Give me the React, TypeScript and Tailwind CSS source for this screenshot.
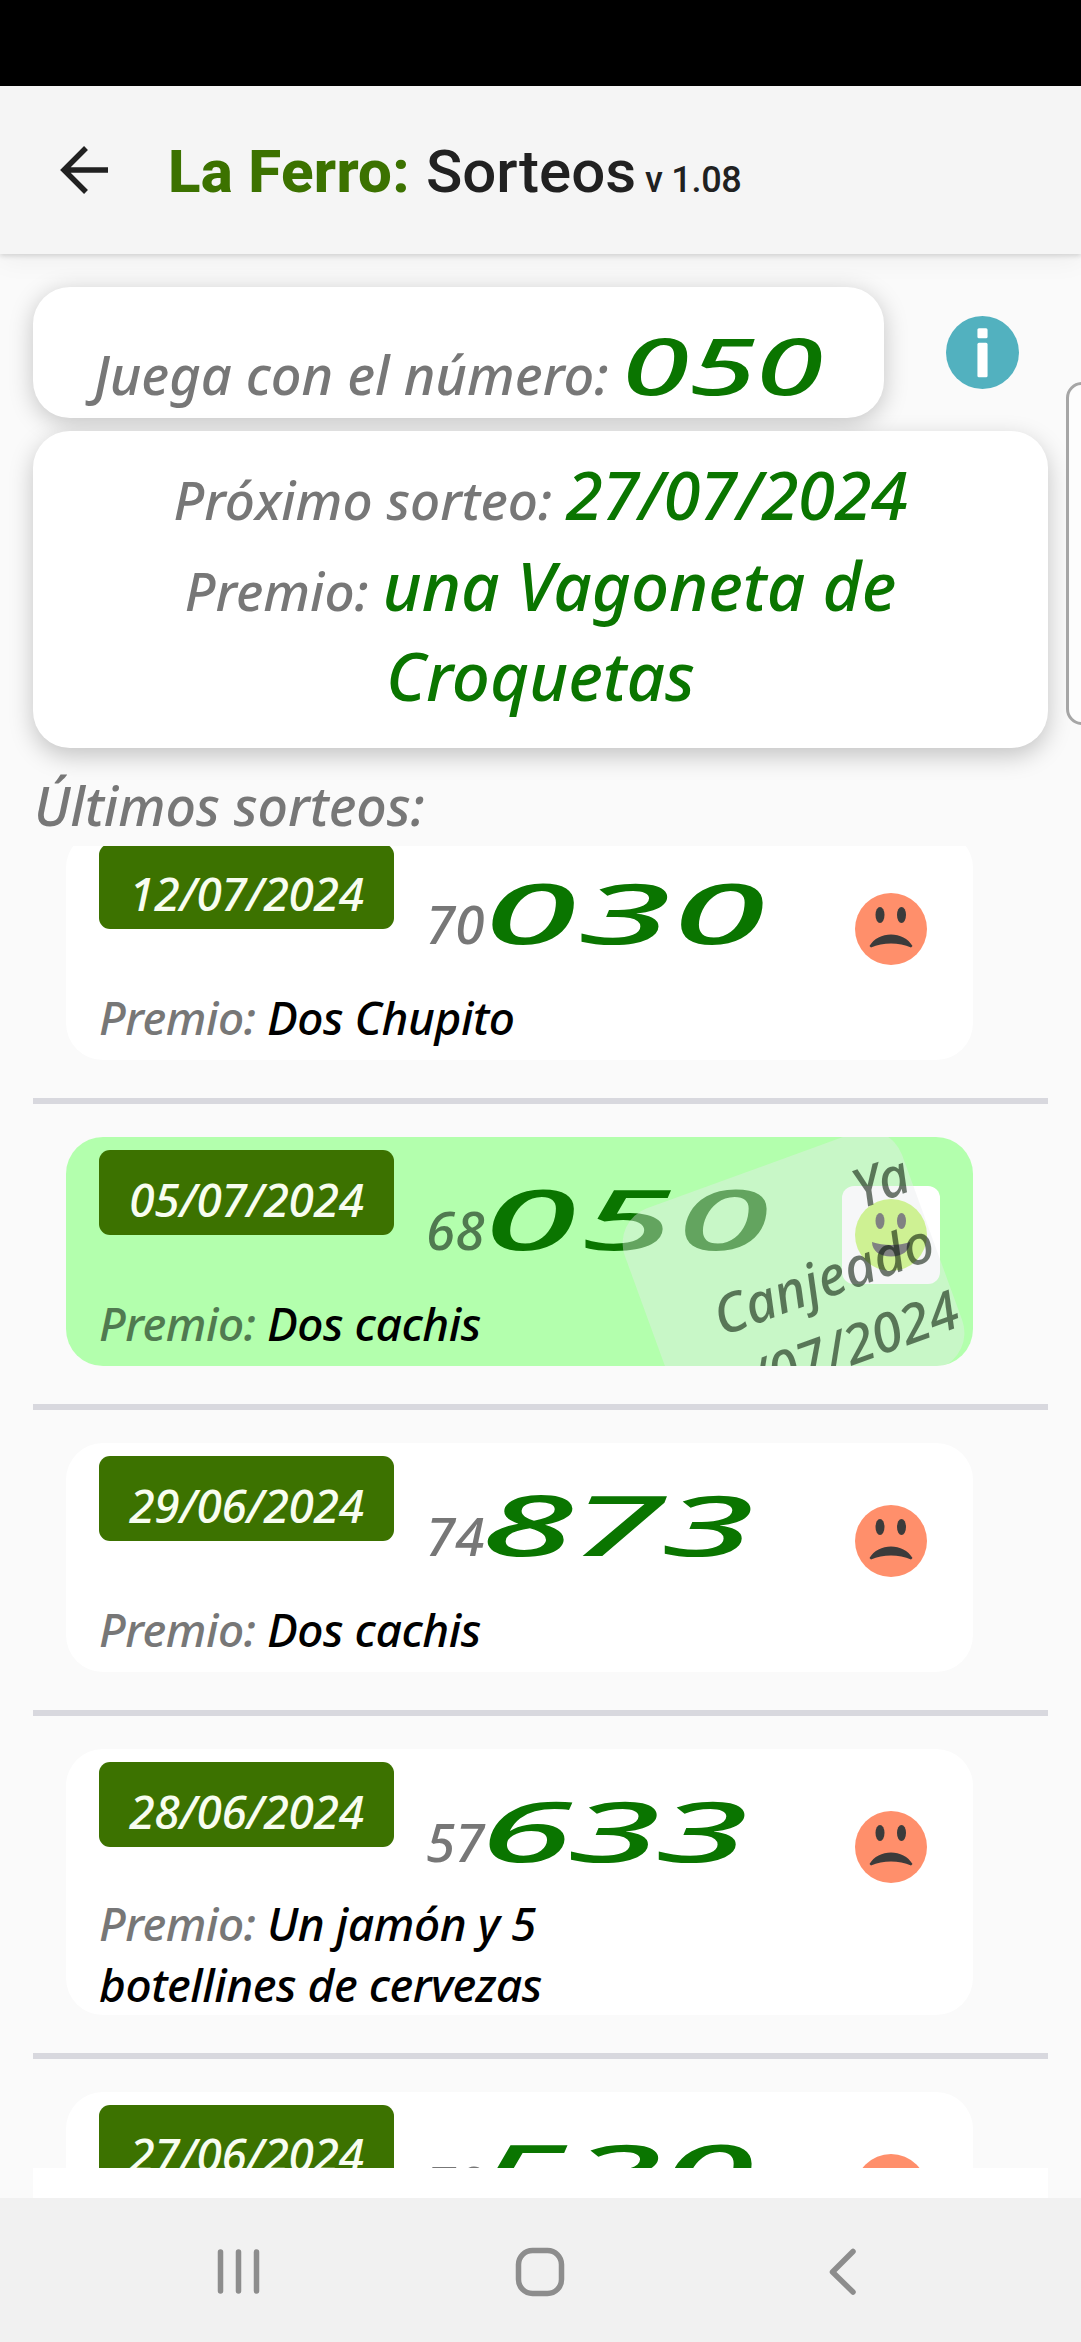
import React from 'react';
import clsx from 'clsx';

interface Draw {
  date: string;
  series: string;
  number: string;
  numberClass: string;
  prize: string;
  won?: boolean;
}

const draws: Draw[] = [
  { date: '12/07/2024', series: '70', number: '030', numberClass: 'tracking-[1px]', prize: 'Dos Chupito' },
  { date: '05/07/2024', series: '68', number: '050', numberClass: 'tracking-[2px]', prize: 'Dos cachis', won: true },
  { date: '29/06/2024', series: '74', number: '873', numberClass: '-ml-[3px] tracking-[-1px]', prize: 'Dos cachis' },
  {
    date: '28/06/2024',
    series: '57',
    number: '633',
    numberClass: '-ml-[4px] tracking-[-2.2px]',
    prize: 'Un jamón y 5 botellines de cervezas',
  },
  { date: '27/06/2024', series: '70', number: '530', numberClass: '-ml-[7px] tracking-normal', prize: 'Dos cachis' },
];

const SadFace = () => (
  <svg viewBox="-36 -36 72 72" className="w-[72px] h-[72px]">
    <circle r="36" fill="#ff8f6b" />
    <ellipse cx="-11" cy="-14" rx="4.5" ry="8" fill="#3b3b3b" />
    <ellipse cx="10.5" cy="-14" rx="4.5" ry="8" fill="#3b3b3b" />
    <path d="M-21.5 17 C-13 1.500 13 1.500 21.500 17 L20 18.500 C8 13 -8 13 -20 18.500 Z" fill="#3b3b3b" />
  </svg>
);

const HappyFace = () => (
  <svg viewBox="-36 -36 72 72" className="w-[72px] h-[72px]">
    <circle r="36" fill="#bdf558" />
    <ellipse cx="-11" cy="-14" rx="4.5" ry="8" fill="#3b3b3b" />
    <ellipse cx="10.5" cy="-14" rx="4.5" ry="8" fill="#3b3b3b" />
    <path d="M-19 7 C-8 11 8 11 19 7 C19 16 11 21.500 0 21.500 C-11 21.500 -19 16 -19 7 Z" fill="#3b3b3b" />
  </svg>
);

const InfoIcon = () => (
  <svg viewBox="-36 -36 72 72" className="w-[73px] h-[73px]">
    <circle r="36" fill="#52b1bf" />
    <rect x="-5" y="-24" width="10" height="10" rx="1.500" fill="#fff" />
    <rect x="-5" y="-9.500" width="10" height="34" rx="1.500" fill="#fff" />
  </svg>
);

const DrawCard: React.FC<{ draw: Draw }> = ({ draw }) => (
  <div
    className={clsx(
      'relative ml-[33px] mr-[75px] rounded-[37px] overflow-hidden px-[33px]',
      draw.won ? 'bg-[#b3ffad]' : 'bg-white'
    )}
  >
    <div className="flex items-start h-[144px]">
      <div className="mt-[13px] w-[295px] h-[85px] pt-[19px] rounded-[11px] bg-[#3c7200] text-center text-[46px] leading-[60px] tracking-[-0.3px] text-[#f8fdf0]">
        {draw.date}
      </div>
      <div className="ml-8 mt-[39px] flex items-baseline leading-[83px]">
        <span className={clsx('text-[53px]', draw.won ? 'text-[#507a50]' : 'text-[#777777]')}>{draw.series}</span>
        <span className={clsx('text-[83px] text-[#0a7500] origin-left scale-x-[2.02]', draw.numberClass)}>
          {draw.number}
        </span>
      </div>
      <div
        className={clsx(
          'ml-auto mt-[49px] w-[98px] h-[98px] shrink-0 rounded-[12px] flex items-center justify-center',
          draw.won && 'bg-white'
        )}
      >
        {draw.won ? <HappyFace /> : <SadFace />}
      </div>
    </div>
    <div className="flex items-center min-h-[85px]">
      <p className="w-[460px] text-[46px] leading-[61px] tracking-[-0.45px] text-black">
        <span className={draw.won ? 'text-[#507a50]' : 'text-[#777777]'}>Premio:</span> {draw.prize}
      </p>
    </div>

    {/* Redeemed stamp */}
    {draw.won && (
      <div className="absolute left-[580px] top-[26px] w-[295px] h-[250px] -rotate-20 rounded-[37px] bg-[#e8ebee]/40 pt-[17px] pr-[1px] flex flex-col items-end text-[54px] leading-[72px] text-[#001000]/56">
        <span>Ya</span>
        <span>Canjeado</span>
        <span>/07/2024</span>
      </div>
    )}
  </div>
);

export default function App() {
  return (
    <div className="relative w-[1081px] h-[2342px] flex flex-col overflow-hidden bg-[#fafafa] font-['Noto_Sans',sans-serif] font-medium italic">
      <div className="h-[86px] shrink-0 bg-black" />

      {/* Header */}
      <header className="relative z-10 h-[168px] shrink-0 bg-[#f5f5f5] flex items-center pl-[60px] shadow-[0_2px_5px_rgba(0,0,0,0.14),0_6px_26px_rgba(0,0,0,0.05)]">
        <svg viewBox="0 0 48 48" className="w-12 h-12" fill="none" stroke="#212121" strokeWidth="5.500">
          <path d="M48 24 H4 M26 2 L4 24 L26 46" />
        </svg>
        <h1 className="ml-[60px] mt-[4px] flex items-baseline font-['Roboto',sans-serif] not-italic text-[60px] text-[#212121]">
          <span className="w-[258px] font-extrabold tracking-[0.3px] text-[#3c7200]">La Ferro:</span>
          <span>Sorteos</span>
          <span className="ml-[9px] text-[36px] tracking-[-0.3px]">v 1.08</span>
        </h1>
      </header>

      <div className="flex items-center mt-[33px] px-[33px]">
        <div className="w-[851px] h-[131px] rounded-[37px] bg-white pl-[61px] pt-[42px] flex items-baseline leading-[72px] shadow-[0_5px_24px_rgba(0,0,0,0.22)]">
          <span className="w-[528px] text-[54px] text-[#777777]">Juega con el número:</span>
          <span className="text-[78px] text-[#0a7500] origin-left scale-x-[1.56]">050</span>
        </div>
        <button className="ml-[62px]">
          <InfoIcon />
        </button>
      </div>

      <div className="relative mt-[13px] mx-[33px] h-[317px] shrink-0 rounded-[37px] bg-white px-[100px] pt-[18px] text-center text-[67px] leading-[90.5px] text-[#0a7500] shadow-[0_8px_24px_rgba(0,0,0,0.22)]">
        <p className="tracking-[-0.4px]">
          <span className="text-[53px] leading-none text-[#777777] tracking-normal">Próximo sorteo: </span>
          27/07/2024
        </p>
        <p>
          <span className="text-[53px] leading-none text-[#777777]">Premio: </span>
          una Vagoneta de Croquetas
        </p>
      </div>

      <h2 className="h-[98px] shrink-0 pl-[34px] pt-[22px] text-[53.5px] leading-[72px] text-[#777777]">
        Últimos sorteos:
      </h2>

      <div className="mx-[33px] h-[1322px] shrink-0 overflow-hidden">
        <div className="-mt-[15px]">
          {draws.map((draw) => (
            <React.Fragment key={draw.date}>
              <DrawCard draw={draw} />
              <div className="mt-[38px] mb-[33px] h-[6px] bg-[#d8d8de]" />
            </React.Fragment>
          ))}
        </div>
      </div>
      <div className="mx-[33px] h-[30px] shrink-0 bg-white" />

      {/* Android navigation bar */}
      <nav className="h-[144px] shrink-0 bg-[#f1f1f1] flex items-center pl-[217px] pt-[4px]">
        <svg viewBox="0 0 44 48" className="w-[44px] h-[48px]" stroke="#8d8d8d" strokeWidth="5.500" strokeLinecap="round">
          <path d="M3.500 4 V43 M21.500 4 V43 M39.500 4 V43" />
        </svg>
        <svg viewBox="0 0 50 50" className="ml-[254px] w-[50px] h-[50px]" fill="none" stroke="#8d8d8d" strokeWidth="5.500">
          <rect x="3.500" y="3.500" width="43" height="43" rx="14" />
        </svg>
        <svg viewBox="0 0 30 48" className="ml-[264px] w-[30px] h-[48px]" fill="none" stroke="#8d8d8d" strokeWidth="5.500" strokeLinecap="round" strokeLinejoin="round">
          <path d="M24 3.500 L3.500 24 L24 44" />
        </svg>
      </nav>

      {/* Edge panel handle */}
      <div className="absolute left-[1066px] top-[382px] w-10 h-[343px] z-20 rounded-[16px] border-[3px] border-[#a6a6a6] bg-[#fdfdfd]" />
    </div>
  );
}
